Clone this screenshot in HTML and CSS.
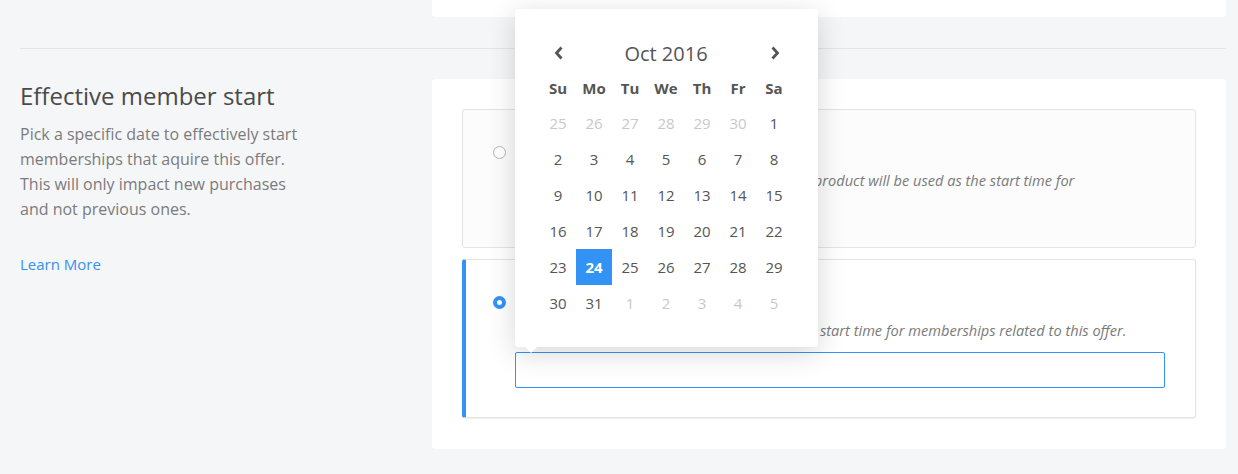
FILE: index.html
```html
<!DOCTYPE html>
<html lang="en">
<head>
    <meta charset="UTF-8">
    <meta name="viewport" content="width=device-width, initial-scale=1.0">
    <title>Offer settings</title>
    <link rel="stylesheet" href="styles.css">
</head>
<body>
    <div class="page">
        <div class="card card-top"></div>
        <hr class="divider">

        <div class="section">
            <div class="section-info">
                <h2>Effective member start</h2>
                <p>Pick a specific date to effectively start memberships that aquire this offer. This will only impact new purchases and not previous ones.</p>
                <a href="#" class="learn-more">Learn More</a>
            </div>

            <div class="card section-card">
                <label class="option">
                    <span class="radio"></span>
                    <div class="option-body">
                        <div class="option-title">Date of purchase</div>
                        <p class="option-desc">The date and time a customer purchases your product will be used as the start time for memberships.</p>
                    </div>
                </label>

                <label class="option option-active">
                    <span class="radio radio-on"></span>
                    <div class="option-body">
                        <div class="option-title">Specific date</div>
                        <p class="option-desc">The dates you choose below will be used as the start time for memberships related to this offer.</p>
                        <div class="date-field">
                            <input type="text" class="date-input">

                            <div class="datepicker">
                                <div class="dp-head">
                                    <button class="dp-nav">
                                        <svg width="10" height="14" viewBox="0 0 10 14"><polyline points="7.5,1.5 2.5,7 7.5,12.5" fill="none" stroke="#555" stroke-width="2.8"/></svg>
                                    </button>
                                    <div class="dp-title">Oct 2016</div>
                                    <button class="dp-nav">
                                        <svg width="10" height="14" viewBox="0 0 10 14"><polyline points="2.5,1.5 7.5,7 2.5,12.5" fill="none" stroke="#555" stroke-width="2.8"/></svg>
                                    </button>
                                </div>
                                <div class="dp-grid">
                                    <span class="dp-dow">Su</span><span class="dp-dow">Mo</span><span class="dp-dow">Tu</span><span class="dp-dow">We</span><span class="dp-dow">Th</span><span class="dp-dow">Fr</span><span class="dp-dow">Sa</span>
                                    <span class="dp-day muted">25</span><span class="dp-day muted">26</span><span class="dp-day muted">27</span><span class="dp-day muted">28</span><span class="dp-day muted">29</span><span class="dp-day muted">30</span><span class="dp-day">1</span>
                                    <span class="dp-day">2</span><span class="dp-day">3</span><span class="dp-day">4</span><span class="dp-day">5</span><span class="dp-day">6</span><span class="dp-day">7</span><span class="dp-day">8</span>
                                    <span class="dp-day">9</span><span class="dp-day">10</span><span class="dp-day">11</span><span class="dp-day">12</span><span class="dp-day">13</span><span class="dp-day">14</span><span class="dp-day">15</span>
                                    <span class="dp-day">16</span><span class="dp-day">17</span><span class="dp-day">18</span><span class="dp-day">19</span><span class="dp-day">20</span><span class="dp-day">21</span><span class="dp-day">22</span>
                                    <span class="dp-day">23</span><span class="dp-day selected">24</span><span class="dp-day">25</span><span class="dp-day">26</span><span class="dp-day">27</span><span class="dp-day">28</span><span class="dp-day">29</span>
                                    <span class="dp-day">30</span><span class="dp-day">31</span><span class="dp-day muted">1</span><span class="dp-day muted">2</span><span class="dp-day muted">3</span><span class="dp-day muted">4</span><span class="dp-day muted">5</span>
                                </div>
                            </div>
                        </div>
                    </div>
                </label>
            </div>
        </div>
    </div>
</body>
</html>
```

FILE: styles.css
```css
body {
    margin: 0;
    background-color: #f5f6f8;
    font-family: "Open Sans", "Liberation Sans", sans-serif;
    color: #555;
}

.page {
    padding: 0 12px 0 20px;
}

.card {
    background-color: #fff;
    border-radius: 4px;
}

.card-top {
    margin-left: 412px;
    height: 17px;
    border-radius: 0 0 4px 4px;
}

.divider {
    margin: 31px 0 0;
    border: none;
    border-top: 1px solid #e3e5e8;
}

.section {
    display: flex;
    margin-top: 30px;
}

.section-info {
    width: 412px;
    padding-top: 2px;
}

.section-info h2 {
    margin: 0 0 11px;
    font-size: 24px;
    line-height: 30px;
    font-weight: 400;
    color: #4a4a4a;
}

.section-info p {
    margin: 0;
    width: 290px;
    font-size: 16px;
    line-height: 25px;
    color: #7b7b7b;
}

.learn-more {
    display: inline-block;
    margin-top: 30px;
    font-size: 15px;
    line-height: 25px;
    color: #3790ef;
    text-decoration: none;
}

.section-card {
    flex: 1;
    padding: 30px 30px 31px;
}

.option {
    display: flex;
    border: 1px solid #e4e4e4;
    border-radius: 3px;
    background-color: #fcfcfc;
    padding: 28px 30px 29px 30px;
}

.option + .option {
    margin-top: 11px;
}

.option-active {
    background-color: #fff;
    border-left: 4px solid #3393f5;
    padding: 28px 30px 29px 27px;
    box-shadow: 0 1px 2px rgba(0, 0, 0, 0.08);
}

.radio {
    flex: none;
    width: 13px;
    height: 13px;
    margin-top: 8px;
    margin-right: 9px;
    box-sizing: border-box;
    border: 1px solid #b5b5b5;
    border-radius: 50%;
    background-color: #fff;
}

.radio-on {
    border: 4.5px solid #3393f5;
}

.option-body {
    flex: 1;
}

.option-title {
    font-size: 15px;
    line-height: 26px;
    font-weight: 700;
    color: #555;
    margin-bottom: 4px;
}

.option-desc {
    margin: 0;
    font-size: 14.6px;
    line-height: 25px;
    font-style: italic;
    color: #7a7a7a;
}

.date-field {
    position: relative;
    margin-top: 9px;
}

.date-input {
    display: block;
    width: 100%;
    height: 36px;
    box-sizing: border-box;
    border: 1px solid #3393f5;
    border-radius: 2px;
    outline: none;
    font-family: inherit;
    font-size: 14px;
    padding: 0 12px;
}

/* popover calendar */
.datepicker {
    position: absolute;
    left: 0;
    bottom: calc(100% + 5px);
    width: 303px;
    box-sizing: border-box;
    padding: 26px 26px 26px 25px;
    background-color: #fff;
    border-radius: 3px;
    box-shadow: 0 6px 28px rgba(0, 0, 0, 0.16);
}

.datepicker::after {
    content: "";
    position: absolute;
    left: 10px;
    bottom: -6px;
    border-left: 6px solid transparent;
    border-right: 6px solid transparent;
    border-top: 6px solid #fff;
}

.dp-head {
    display: flex;
    align-items: center;
    height: 36px;
}

.dp-nav {
    width: 36px;
    height: 36px;
    border: none;
    background: none;
    padding: 0 0 0 1px;
    display: flex;
    align-items: center;
    justify-content: center;
    cursor: pointer;
}

.dp-title {
    flex: 1;
    text-align: center;
    font-size: 20px;
    color: #555;
}

.dp-grid {
    display: grid;
    grid-template-columns: repeat(7, 36px);
    grid-auto-rows: 36px;
    grid-template-rows: 34px;
}

.dp-grid span {
    display: flex;
    align-items: center;
    justify-content: center;
    font-size: 15px;
}

.dp-dow {
    font-weight: 700;
    color: #555;
}

.dp-day {
    color: #555;
}

.dp-day.muted {
    color: #c8c8c8;
}

.dp-day.selected {
    background-color: #3393f5;
    color: #fff;
    font-weight: 700;
}
```
